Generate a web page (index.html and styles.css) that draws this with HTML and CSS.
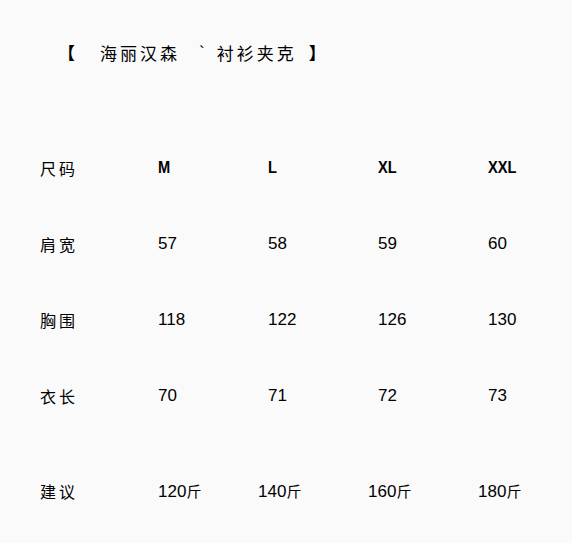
FILE: index.html
```html
<!DOCTYPE html>
<html lang="zh-CN">
<head>
<meta charset="utf-8">
<link rel="stylesheet" href="styles.css">
</head>
<body>
<div class="page">
  <div class="title">
    <span class="br">【</span><span class="brand">海丽汉森</span><span class="tick">`</span><span class="name">衬衫夹克</span><span class="br2">】</span>
  </div>
  <div class="table">
    <div class="row head">
      <div class="label">尺码</div>
      <div class="cell"><span class="sz">M</span></div>
      <div class="cell"><span class="sz">L</span></div>
      <div class="cell"><span class="sz">XL</span></div>
      <div class="cell"><span class="sz">XXL</span></div>
    </div>
    <div class="row">
      <div class="label">肩宽</div>
      <div class="cell">57</div>
      <div class="cell">58</div>
      <div class="cell">59</div>
      <div class="cell">60</div>
    </div>
    <div class="row">
      <div class="label">胸围</div>
      <div class="cell">118</div>
      <div class="cell">122</div>
      <div class="cell">126</div>
      <div class="cell">130</div>
    </div>
    <div class="row">
      <div class="label">衣长</div>
      <div class="cell">70</div>
      <div class="cell">71</div>
      <div class="cell">72</div>
      <div class="cell">73</div>
    </div>
    <div class="row last">
      <div class="label">建议</div>
      <div class="cell">120<span class="jin">斤</span></div>
      <div class="cell">140<span class="jin">斤</span></div>
      <div class="cell">160<span class="jin">斤</span></div>
      <div class="cell">180<span class="jin">斤</span></div>
    </div>
  </div>
</div>
</body>
</html>
```
FILE: styles.css
```css
html, body {
  margin: 0;
  padding: 0;
  background: #fafafa;
}
body {
  width: 572px;
  height: 543px;
  overflow: hidden;
  color: #000;
  font-family: "Liberation Sans", Arial, "Noto Sans CJK SC", sans-serif;
}
.page {
  padding: 0 0 0 40px;
}
.title {
  display: flex;
  align-items: center;
  height: 24px;
  margin-top: 41px;
  margin-left: 18px;
  font-family: "Noto Sans CJK SC", sans-serif;
  font-size: 17px;
  line-height: 24px;
}
.title .br {
  font-weight: 700;
  width: 17px;
}
.title .brand {
  margin-left: 25px;
  letter-spacing: 3px;
}
.title .tick {
  margin-left: 19px;
  font-family: "Liberation Sans", sans-serif;
}
.title .name {
  margin-left: 12px;
  letter-spacing: 3px;
}
.title .br2 {
  font-weight: 700;
  margin-left: 12px;
}
.table {
  margin-top: 65px;
}
.row {
  display: grid;
  grid-template-columns: 118px 110px 110px 110px 1fr;
  height: 76px;
  align-items: center;
  font-size: 17px;
}
.row.head .sz {
  display: inline-block;
  font-weight: 700;
  font-size: 17px;
  transform: scaleX(0.86);
  transform-origin: left center;
}
.row.last {
  margin-top: 19px;
  grid-template-columns: 118px 100px 110px 110px 1fr;
}
.label {
  font-family: "Noto Sans CJK SC", sans-serif;
  font-size: 16px;
  letter-spacing: 3px;
}
.jin {
  font-family: "Noto Sans CJK SC", sans-serif;
  font-size: 15px;
}
```
